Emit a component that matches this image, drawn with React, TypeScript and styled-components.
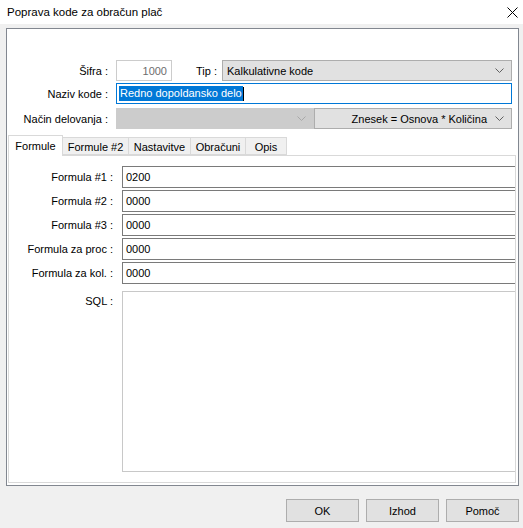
import styled, { createGlobalStyle } from "styled-components";

const GlobalStyles = createGlobalStyle`
  html, body {
    margin: 0;
    padding: 0;
    background: #f0f0f0;
  }
  body {
    font-family: "Liberation Sans", Arial, sans-serif;
    font-size: 11px;
    color: #000;
  }
  * {
    box-sizing: border-box;
  }
`;

const Window = styled.div`
  width: 523px;
  height: 528px;
  display: flex;
  flex-direction: column;
  background: #f0f0f0;
  overflow: hidden;
`;

const TitleBar = styled.div`
  height: 24px;
  flex-shrink: 0;
  background: #fff;
  display: flex;
  align-items: center;
  justify-content: space-between;
  padding: 0 5px 0 7px;
  font-size: 11.5px;
`;

const Body = styled.div`
  flex: 1;
  display: flex;
  flex-direction: column;
  padding: 4px 4px 0 6px;
`;

const Frame = styled.div`
  height: 458px;
  border: 1px solid #828790;
  background: #fff;
  display: flex;
  flex-direction: column;
`;

const HeaderForm = styled.div`
  display: flex;
  flex-direction: column;
  padding: 31px 6px 0 0;
`;

const FieldRow = styled.div<{ $top?: number }>`
  display: flex;
  align-items: center;
  height: 21px;
  margin-top: ${(p) => p.$top ?? 0}px;
`;

const Label = styled.div<{ $width: number; $gap: number }>`
  width: ${(p) => p.$width}px;
  margin-right: ${(p) => p.$gap}px;
  flex-shrink: 0;
  text-align: right;
  white-space: nowrap;
`;

const TextBox = styled.div<{ $variant?: "disabled" | "focused" | "plain" }>`
  height: 100%;
  display: flex;
  align-items: center;
  padding: 0 2px;
  background: #fff;
  white-space: nowrap;
  border: 1px solid
    ${(p) =>
      p.$variant === "disabled"
        ? "#cccccc"
        : p.$variant === "focused"
        ? "#0078d7"
        : "#7a7a7a"};
`;

const CodeBox = styled(TextBox)`
  width: 56px;
  justify-content: flex-end;
  color: #6d6d6d;
  padding-right: 4px;
`;

const NameBox = styled(TextBox)`
  flex: 1;
`;

const Selected = styled.span`
  background: #0078d7;
  color: #fff;
  line-height: 15px;
  padding: 0 1px;
`;

const Caret = styled.span`
  width: 1px;
  height: 14px;
  background: #000;
`;

const Combo = styled.div<{ $disabled?: boolean; $align?: "left" | "right" }>`
  flex: 1;
  height: 100%;
  display: flex;
  align-items: center;
  justify-content: ${(p) => (p.$align === "right" ? "flex-end" : "space-between")};
  gap: 8px;
  padding: 0 7px 0 4px;
  white-space: nowrap;
  background: ${(p) => (p.$disabled ? "#cccccc" : "#e1e1e1")};
  border: 1px solid ${(p) => (p.$disabled ? "#cccccc" : "#adadad")};
`;

const TabControl = styled.div`
  flex: 1;
  display: flex;
  flex-direction: column;
  margin: 6px 2px 2px 1px;
`;

const TabStrip = styled.div`
  display: flex;
  align-items: flex-end;
  height: 20px;
`;

const Tab = styled.div<{ $active?: boolean; $width: number }>`
  width: ${(p) => p.$width}px;
  height: ${(p) => (p.$active ? 21 : 18)}px;
  margin-bottom: ${(p) => (p.$active ? -1 : 0)}px;
  margin-right: -1px;
  display: flex;
  align-items: center;
  justify-content: center;
  padding-top: ${(p) => (p.$active ? 0 : 1)}px;
  position: relative;
  z-index: ${(p) => (p.$active ? 1 : 0)};
  background: ${(p) => (p.$active ? "#fff" : "#f0f0f0")};
  border: 1px solid #d9d9d9;
  border-bottom: ${(p) => (p.$active ? "none" : "1px solid #d9d9d9")};
  white-space: nowrap;
`;

const TabPage = styled.div`
  flex: 1;
  display: flex;
  flex-direction: column;
  gap: 2px;
  padding: 10px 0 10px 0;
  border: 1px solid #d9d9d9;
  background: #fff;
  overflow: hidden;
`;

const FormulaRow = styled.div<{ $grow?: boolean; $top?: number }>`
  display: flex;
  align-items: ${(p) => (p.$grow ? "flex-start" : "center")};
  height: ${(p) => (p.$grow ? "auto" : "22px")};
  flex: ${(p) => (p.$grow ? 1 : "none")};
  margin-top: ${(p) => p.$top ?? 0}px;
`;

const FormulaLabel = styled.div<{ $pad?: number }>`
  width: 104px;
  margin-right: 9px;
  flex-shrink: 0;
  text-align: right;
  white-space: nowrap;
  padding-top: ${(p) => p.$pad ?? 0}px;
`;

const FormulaBox = styled(TextBox)`
  flex: 1;
  margin-right: -10px;
  padding-left: 3px;
`;

const SqlBox = styled.div`
  flex: 1;
  align-self: stretch;
  margin-right: -10px;
  border: 1px solid #c8c8c8;
  background: #fff;
`;

const ButtonBar = styled.div`
  display: flex;
  justify-content: flex-end;
  gap: 7px;
  margin-top: 13px;
`;

const Button = styled.button`
  width: 73px;
  height: 23px;
  padding: 0;
  font: inherit;
  color: #000;
  background: #e1e1e1;
  border: 1px solid #adadad;
`;

function Chevron({ color = "#606060" }: { color?: string }) {
  return (
    <svg width="9" height="5" viewBox="0 0 9 5">
      <path d="M0.5 0.5 L4.5 4.5 L8.5 0.5" fill="none" stroke={color} strokeWidth="1" />
    </svg>
  );
}

function CloseIcon() {
  return (
    <svg width="11" height="11" viewBox="0 0 11 11">
      <path d="M0.5 0.5 L10.5 10.5 M10.5 0.5 L0.5 10.5" stroke="#000" strokeWidth="1" />
    </svg>
  );
}

const formulas = [
  { label: "Formula #1 :", value: "0200" },
  { label: "Formula #2 :", value: "0000" },
  { label: "Formula #3 :", value: "0000" },
  { label: "Formula za proc :", value: "0000" },
  { label: "Formula za kol. :", value: "0000" },
];

const tabs = [
  { title: "Formule", width: 55 },
  { title: "Formule #2", width: 67 },
  { title: "Nastavitve", width: 63 },
  { title: "Obračuni", width: 56 },
  { title: "Opis", width: 42 },
];

export default function App() {
  return (
    <>
      <GlobalStyles />
      <Window>
        <TitleBar>
          <span>Poprava kode za obračun plač</span>
          <CloseIcon />
        </TitleBar>
        <Body>
          <Frame>
            <HeaderForm>
              <FieldRow>
                <Label $width={101} $gap={8}>Šifra :</Label>
                <CodeBox $variant="disabled">1000</CodeBox>
                <Label $width={45} $gap={5}>Tip :</Label>
                <Combo>
                  <span>Kalkulativne kode</span>
                  <Chevron />
                </Combo>
              </FieldRow>
              <FieldRow $top={2}>
                <Label $width={101} $gap={8}>Naziv kode :</Label>
                <NameBox $variant="focused">
                  <Selected>Redno dopoldansko delo</Selected>
                  <Caret />
                </NameBox>
              </FieldRow>
              <FieldRow $top={4}>
                <Label $width={101} $gap={8}>Način delovanja :</Label>
                <Combo $disabled $align="right">
                  <Chevron color="#a8a8a8" />
                </Combo>
                <Combo $align="right">
                  <span>Znesek = Osnova * Količina</span>
                  <Chevron />
                </Combo>
              </FieldRow>
            </HeaderForm>
            <TabControl>
              <TabStrip>
                {tabs.map((t, i) => (
                  <Tab key={t.title} $active={i === 0} $width={t.width}>
                    {t.title}
                  </Tab>
                ))}
              </TabStrip>
              <TabPage>
                {formulas.map((f) => (
                  <FormulaRow key={f.label}>
                    <FormulaLabel>{f.label}</FormulaLabel>
                    <FormulaBox>{f.value}</FormulaBox>
                  </FormulaRow>
                ))}
                <FormulaRow $grow $top={5}>
                  <FormulaLabel $pad={4}>SQL :</FormulaLabel>
                  <SqlBox />
                </FormulaRow>
              </TabPage>
            </TabControl>
          </Frame>
          <ButtonBar>
            <Button>OK</Button>
            <Button>Izhod</Button>
            <Button>Pomoč</Button>
          </ButtonBar>
        </Body>
      </Window>
    </>
  );
}
